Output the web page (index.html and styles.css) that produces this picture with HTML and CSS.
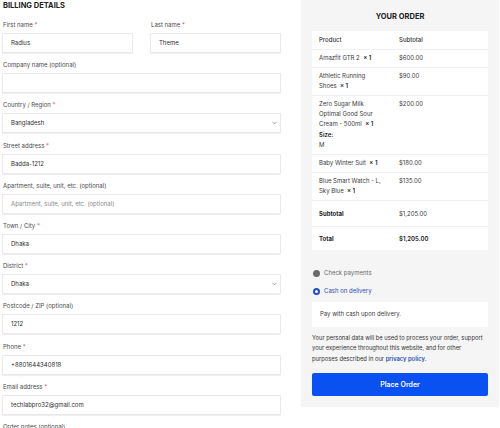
FILE: index.html
```html
<!DOCTYPE html>
<html lang="en">
<head>
<meta charset="utf-8">
<title>Checkout</title>
<link rel="stylesheet" href="styles.css">
</head>
<body>
<div class="page">
  <section class="billing">
    <h2 class="title">BILLING DETAILS</h2>
    <div class="pair">
      <div class="field">
        <label class="label">First name <span class="req">*</span></label>
        <div class="input">Radius</div>
      </div>
      <div class="field">
        <label class="label">Last name <span class="req">*</span></label>
        <div class="input">Theme</div>
      </div>
    </div>
    <div class="field">
      <label class="label">Company name (optional)</label>
      <div class="input"></div>
    </div>
    <div class="field">
      <label class="label">Country / Region <span class="req">*</span></label>
      <div class="input select">Bangladesh
        <svg class="chev" width="5" height="4" viewBox="0 0 5 4"><path d="M0.6 0.9 L2.5 2.9 L4.4 0.9" fill="none" stroke="#888" stroke-width="0.8"/></svg>
      </div>
    </div>
    <div class="field">
      <label class="label">Street address <span class="req">*</span></label>
      <div class="input">Badda-1212</div>
    </div>
    <div class="field">
      <label class="label">Apartment, suite, unit, etc. (optional)</label>
      <div class="input placeholder">Apartment, suite, unit, etc. (optional)</div>
    </div>
    <div class="field">
      <label class="label">Town / City <span class="req">*</span></label>
      <div class="input">Dhaka</div>
    </div>
    <div class="field">
      <label class="label">District <span class="req">*</span></label>
      <div class="input select">Dhaka
        <svg class="chev" width="5" height="4" viewBox="0 0 5 4"><path d="M0.6 0.9 L2.5 2.9 L4.4 0.9" fill="none" stroke="#888" stroke-width="0.8"/></svg>
      </div>
    </div>
    <div class="field">
      <label class="label">Postcode / ZIP (optional)</label>
      <div class="input">1212</div>
    </div>
    <div class="field">
      <label class="label">Phone <span class="req">*</span></label>
      <div class="input">+8801644340818</div>
    </div>
    <div class="field">
      <label class="label">Email address <span class="req">*</span></label>
      <div class="input">techlabpro32@gmail.com</div>
    </div>
    <div class="field">
      <label class="label">Order notes (optional)</label>
    </div>
  </section>

  <aside class="order">
    <h3 class="order-title">YOUR ORDER</h3>
    <table class="items">
      <thead>
        <tr><th class="c1">Product</th><th class="c2">Subtotal</th></tr>
      </thead>
      <tbody>
        <tr><td class="c1">Amazfit GTR 2 &nbsp;<b>× 1</b></td><td class="c2">$600.00</td></tr>
        <tr><td class="c1">Athletic Running<br>Shoes &nbsp;<b>× 1</b></td><td class="c2">$90.00</td></tr>
        <tr><td class="c1">Zero Sugar Milk<br>Optimal Good Sour<br>Cream - 500ml &nbsp;<b>× 1</b>
          <div class="meta"><b>Size:</b><br>M</div></td><td class="c2">$200.00</td></tr>
        <tr><td class="c1">Baby Winter Suit &nbsp;<b>× 1</b></td><td class="c2">$180.00</td></tr>
        <tr><td class="c1">Blue Smart Watch - L,<br>Sky Blue &nbsp;<b>× 1</b></td><td class="c2">$135.00</td></tr>
        <tr class="sum"><th class="c1">Subtotal</th><td class="c2">$1,205.00</td></tr>
        <tr class="sum total"><th class="c1">Total</th><td class="c2"><strong>$1,205.00</strong></td></tr>
      </tbody>
    </table>

    <ul class="methods">
      <li class="method"><span class="radio"></span>Check payments</li>
      <li class="method active"><span class="radio"></span>Cash on delivery</li>
    </ul>
    <div class="method-box">Pay with cash upon delivery.</div>

    <p class="privacy">Your personal data will be used to process your order, support your experience throughout this website, and for other purposes described in our <a class="link" href="#">privacy policy</a>.</p>

    <button class="place" type="button">Place Order</button>
  </aside>
</div>
</body>
</html>
```

FILE: styles.css
```css
* { box-sizing: border-box; }

html, body {
  margin: 0;
  padding: 0;
  background: #ffffff;
  overflow: hidden;
}

body {
  font-family: Inter, "Noto Sans", sans-serif;
  color: #333333;
  font-size: 6px;
}

.page {
  display: flex;
  align-items: flex-start;
  gap: 20px;
  padding-left: 2px;
}

.billing {
  width: 279px;
  flex: none;
}

.title {
  margin: 0 0 9px 1px;
  font-size: 7.5px;
  line-height: 11px;
  font-weight: 700;
  color: #222222;
}

.pair {
  display: flex;
  gap: 17px;
}

.pair .field { flex: 1; }

.field {
  margin-bottom: 7.2px;
}

.label {
  display: block;
  height: 10px;
  line-height: 10px;
  margin-bottom: 3px;
  padding-left: 1px;
  font-size: 6px;
  color: #4a4a4a;
}

.req { color: #e0465a; }

.input {
  position: relative;
  height: 20px;
  line-height: 18px;
  padding: 0 8px;
  border: 1px solid #e9e9e9;
  border-radius: 1px;
  box-shadow: 0 1px 1px rgba(0, 0, 0, 0.07);
  background: #ffffff;
  font-size: 6px;
  color: #2e2e2e;
  white-space: nowrap;
}

.placeholder { color: #8a8a8a; }

.chev {
  position: absolute;
  right: 3px;
  top: 7px;
}

.order {
  width: 198px;
  flex: none;
  background: #f5f5f5;
  padding: 11px 11px 11px;
}

.order-title {
  margin: 0 0 9px;
  text-align: center;
  font-size: 7.5px;
  line-height: 11px;
  font-weight: 700;
  color: #222222;
}

.items {
  width: 176px;
  border-collapse: collapse;
  background: #ffffff;
  font-size: 6px;
  line-height: 10px;
}

.items th,
.items td {
  text-align: left;
  vertical-align: top;
  padding: 3px 7px 4px;
  border-bottom: 1px solid #f1f1f1;
  color: #3a3a3a;
}

.items thead th {
  font-weight: 500;
  padding: 4px 7px;
  color: #333333;
}

.items .c1 { width: 80px; }

.items b { font-weight: 600; color: #222222; }

.meta {
  margin-top: 1px;
  line-height: 10px;
}

.meta b { font-weight: 600; }

.items .sum th,
.items .sum td {
  padding-top: 7.5px;
  padding-bottom: 7.5px;
}

.items .sum th { font-weight: 700; color: #222222; }

.items .total th,
.items .total td {
  padding-top: 6.5px;
  padding-bottom: 6.5px;
  border-bottom: none;
}

.items .total strong { font-weight: 600; color: #222222; }

.methods {
  list-style: none;
  margin: 18px 0 0;
  padding: 0;
}

.method {
  display: flex;
  align-items: center;
  height: 10px;
  line-height: 10px;
  margin-bottom: 8px;
  padding-left: 1px;
  font-size: 6px;
  color: #6a6a6a;
}

.method:last-child { margin-bottom: 0; }

.radio {
  width: 7px;
  height: 7px;
  border-radius: 50%;
  background: #6b6b6b;
  margin-right: 4px;
  flex: none;
}

.method.active { color: #2c4fb8; }

.method.active .radio {
  background: #ffffff;
  border: 2px solid #1f4fc4;
}

.method-box {
  width: 176px;
  margin-top: 5.5px;
  height: 25px;
  padding: 7.5px 8px;
  line-height: 10px;
  background: #ffffff;
  font-size: 6px;
  color: #3a3a3a;
}

.privacy {
  margin: 6px 0 0;
  font-size: 5.8px;
  line-height: 10.5px;
  color: #333333;
}

.link {
  color: #2c4fb8;
  font-weight: 600;
  text-decoration: none;
}

.place {
  display: block;
  width: 176px;
  height: 23px;
  margin-top: 9px;
  border: none;
  border-radius: 2px;
  background: #0a51f2;
  color: #ffffff;
  font-family: Inter, "Noto Sans", sans-serif;
  font-size: 7px;
  font-weight: 600;
  padding: 0;
}
```
